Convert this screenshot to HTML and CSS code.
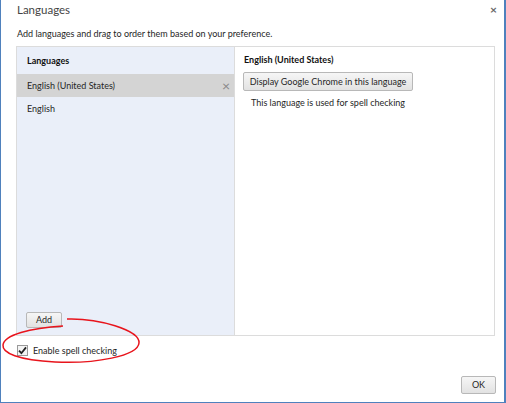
FILE: index.html
```html
<!DOCTYPE html>
<html>
<head>
<meta charset="utf-8">
<link rel="stylesheet" href="styles.css">
</head>
<body>
<div class="dialog">
  <div class="titlebar">
    <span class="title">Languages</span>
    <span class="close">×</span>
  </div>
  <div class="subtitle">Add languages and drag to order them based on your preference.</div>
  <div class="panel">
    <div class="left">
      <div class="col-head">Languages</div>
      <div class="row selected"><span>English (United States)</span><span class="remove">×</span></div>
      <div class="row">English</div>
      <div class="spacer"></div>
      <div class="add-wrap"><button class="btn add">Add</button></div>
    </div>
    <div class="right">
      <div class="col-head r">English (United States)</div>
      <div class="right-body">
        <button class="btn display">Display Google Chrome in this language</button>
        <div class="note">This language is used for spell checking</div>
      </div>
    </div>
  </div>
  <div class="check-row">
    <span class="checkbox"><svg width="9" height="9" viewBox="0 0 9 9"><path d="M1 4.6 L3.4 7.2 L8 1.4" fill="none" stroke="#222" stroke-width="1.8"/></svg></span>
    <span>Enable spell checking</span>
  </div>
  <div class="footer"><button class="btn ok">OK</button></div>
  <svg class="annot" width="506" height="403" viewBox="0 0 506 403">
    <path d="M67,319 C98,318 140,330 139,343 C138,356 95,364 55,362 C18,360 2,353 3,345 C4,335 30,328 63,326" fill="none" stroke="#e8141c" stroke-width="1.5"/>
  </svg>
</div>
</body>
</html>
```
FILE: styles.css
```css
* { box-sizing: border-box; }
html, body { margin: 0; padding: 0; background: #fff; }
body { font-family: "Lato", "Open Sans", sans-serif; font-size: 9px; color: #262626; }
.dialog {
  position: relative;
  width: 506px; height: 403px;
  border-left: 1px solid #4f81bd;
  border-right: 2px solid #4f81bd;
  border-bottom: 1px solid #4f81bd;
  display: flex; flex-direction: column;
}
.titlebar {
  height: 26px; padding: 2px 0 0 16px;
  display: flex; justify-content: space-between;
}
.title { font-size: 11.5px; line-height: 16px; color: #444; }
.close { font-size: 12px; line-height: 16px; color: #666; margin-right: 7px; font-weight: bold; }
.subtitle { line-height: 16px; padding-left: 16px; height: 20px; }
.panel {
  margin: 0 9px 0 15px; height: 290px;
  border: 1px solid #dcdcdc;
  display: grid; grid-template-columns: 218px 1fr;
}
.left {
  background: #eaeff9; border-right: 1px solid #dcdcdc;
  display: flex; flex-direction: column;
}
.col-head { height: 27px; line-height: 27px; font-weight: bold; color: #111; padding-left: 10px; }
.col-head.r { height: 25px; line-height: 25px; padding-left: 9px; }
.row { height: 23px; line-height: 23px; padding-left: 10px; padding-right: 4px; display: flex; justify-content: space-between; }
.row.selected { background: #d4d4d4; }
.remove { font-size: 14px; color: #888; }
.spacer { flex: 1; }
.add-wrap { padding: 0 0 7px 9px; }
.btn {
  font-family: inherit; font-size: 9px; color: #262626;
  background: linear-gradient(#f6f6f6, #e2e2e2);
  border: 1px solid #b8b8b8; border-radius: 2px;
  padding: 0 8px; margin: 0;
}
.add { height: 16px; line-height: 14px; width: 36px; padding: 0; }
.right-body { padding-left: 8px; }
.display { height: 19px; line-height: 17px; width: 170px; padding: 0; }
.note { padding-left: 8px; line-height: 16px; margin-top: 4px; }
.check-row { display: flex; align-items: center; height: 28px; padding-left: 16px; gap: 5px; }
.checkbox {
  width: 11px; height: 11px; border: 1px solid #999; background: #f4f4f4;
  display: flex; align-items: center; justify-content: center;
}
.footer { flex: 1; display: flex; justify-content: flex-end; align-items: flex-start; padding: 12px 8px 0 0; }
.ok { width: 35px; height: 18px; line-height: 16px; padding: 0; }
.annot { position: absolute; left: -1px; top: 0; pointer-events: none; }
```
